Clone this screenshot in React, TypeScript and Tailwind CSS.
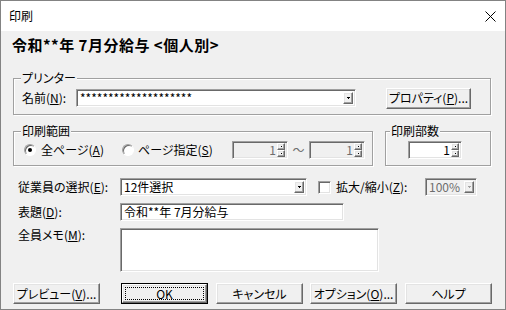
import type { ReactNode } from "react"

const sunken =
  "border border-t-[#a0a0a0] border-l-[#a0a0a0] border-r-white border-b-white shadow-[inset_1px_1px_0_#696969,inset_-1px_-1px_0_#e3e3e3]"
const raised =
  "border border-t-white border-l-white border-r-[#696969] border-b-[#696969] shadow-[inset_-1px_-1px_0_#a0a0a0,inset_1px_1px_0_#e3e3e3] bg-[#f0f0f0]"
const etched = "border border-[#a0a0a0] shadow-[1px_1px_0_#fff,inset_1px_1px_0_#fff]"

function DropArrow({ disabled = false }: { disabled?: boolean }) {
  return (
    <div className={`${raised} w-[10px] h-[12px] flex items-center justify-center shrink-0`}>
      <svg width="3" height="2" viewBox="0 0 3 2">
        <path d="M0 0h3v1H2v1H1V1H0z" fill={disabled ? "#a0a0a0" : "#000"} />
      </svg>
    </div>
  )
}

function Combo({ text, className, disabled = false }: { text: string; className: string; disabled?: boolean }) {
  return (
    <div
      className={`${sunken} ${className} h-[18px] flex items-center pl-[3px] pr-[2px] ${
        disabled ? "bg-[#f0f0f0] text-[#6d6d6d]" : "bg-white"
      }`}
    >
      <span className="flex-1 whitespace-nowrap">{text}</span>
      <DropArrow disabled={disabled} />
    </div>
  )
}

function SpinBtn() {
  return (
    <div className={`${raised} flex-1 flex items-center justify-center`}>
      <div className="w-[1px] h-[1px] bg-black" />
    </div>
  )
}

function Spin({ className, disabled = false }: { className: string; disabled?: boolean }) {
  return (
    <div
      className={`${sunken} ${className} h-[18px] flex items-center justify-end pr-[2px] ${
        disabled ? "bg-[#f0f0f0] text-[#6d6d6d]" : "bg-white"
      }`}
    >
      <span className="mr-[1px]">1</span>
      <div className="flex flex-col w-[8px] h-[14px]">
        <SpinBtn />
        <SpinBtn />
      </div>
    </div>
  )
}

function Radio({ checked = false }: { checked?: boolean }) {
  return (
    <div className="w-[12px] h-[12px] rounded-full border border-t-[#a0a0a0] border-l-[#a0a0a0] border-b-white border-r-white shadow-[inset_1px_1px_0_#696969] bg-white flex items-center justify-center shrink-0">
      {checked && <div className="w-[4px] h-[4px] rounded-full bg-black" />}
    </div>
  )
}

function Button({ children, className, isDefault = false }: { children: ReactNode; className: string; isDefault?: boolean }) {
  if (isDefault) {
    return (
      <div className={`${className} h-[21px] border border-black flex`}>
        <div className={`${raised} flex-1 flex p-[2px]`}>
          <div className="flex-1 border border-dotted border-black flex items-center justify-center whitespace-nowrap">
            {children}
          </div>
        </div>
      </div>
    )
  }
  return (
    <div className={`${raised} ${className} h-[21px] flex items-center justify-center whitespace-nowrap`}>{children}</div>
  )
}

export default function App() {
  return (
    <div className="w-[506px] h-[310px] border border-[#838383] flex flex-col font-['Noto_Sans_CJK_JP','Noto_Sans',sans-serif] [font-feature-settings:'palt'] text-[12px] leading-[14px] text-black overflow-hidden">
      {/* Title bar */}
      <div className="h-[30px] bg-white flex items-center justify-between pl-[8px] pr-[9px] shrink-0">
        <span>印刷</span>
        <svg width="11" height="11" viewBox="0 0 11 11">
          <path d="M0.5 0.5l10 10M10.5 0.5l-10 10" stroke="#000" strokeWidth="1" />
        </svg>
      </div>

      {/* Body */}
      <div className="flex-1 bg-[#f0f0f0] flex flex-col pl-[11px]">
        <h1 className="mt-[5px] text-[15px] leading-[18px] font-bold whitespace-pre tracking-[0.5px] [font-feature-settings:normal]">
          令和**年 7月分給与 &lt;個人別&gt;
        </h1>

        {/* Printer */}
        <div className={`relative ${etched} ml-[1px] mt-[24px] w-[478px] h-[37px] flex items-center pl-[8px] pt-[3px]`}>
          <span className="absolute -top-[8px] left-[7px] bg-[#f0f0f0] px-[1px]">プリンター</span>
          <span className="w-[54px] whitespace-nowrap">
            名前(<u>N</u>):
          </span>
          <Combo text="********************" className="w-[280px]" />
          <Button className="ml-[30px] w-[85px] h-[20px]">
            プロパティ(<u>P</u>)...
          </Button>
        </div>

        {/* Range + copies */}
        <div className="flex ml-[1px] mt-[16px] gap-[12px]">
          <div className={`relative ${etched} w-[360px] h-[35px] flex items-center pl-[10px] pt-[2px]`}>
            <span className="absolute -top-[8px] left-[7px] bg-[#f0f0f0] px-[1px]">印刷範囲</span>
            <div className="w-[98px] flex items-center gap-[5px] whitespace-nowrap">
              <Radio checked />
              <span>
                全ページ(<u>A</u>)
              </span>
            </div>
            <div className="w-[110px] flex items-center gap-[4px] whitespace-nowrap">
              <Radio />
              <span>
                ページ指定(<u>S</u>)
              </span>
            </div>
            <Spin className="w-[56px]" disabled />
            <span className="w-[21px] text-center text-[#6d6d6d]">～</span>
            <Spin className="w-[56px]" disabled />
          </div>
          <div className={`relative ${etched} w-[106px] h-[35px] flex items-center pl-[22px] pt-[2px]`}>
            <span className="absolute -top-[8px] left-[4px] bg-[#f0f0f0] px-[1px]">印刷部数</span>
            <Spin className="w-[54px]" />
          </div>
        </div>

        {/* Employees */}
        <div className="flex items-center ml-[6px] mt-[12px] whitespace-nowrap">
          <span className="w-[102px]">
            従業員の選択(<u>E</u>):
          </span>
          <Combo text="12件選択" className="w-[187px]" />
          <div className={`${sunken} ml-[11px] w-[13px] h-[13px] bg-white`} />
          <span className="ml-[5px] w-[89px]">
            拡大/縮小(<u>Z</u>):
          </span>
          <Combo text="100%" className="w-[52px]" disabled />
        </div>

        {/* Title */}
        <div className="flex items-center ml-[6px] mt-[7px] whitespace-nowrap">
          <span className="w-[102px]">
            表題(<u>D</u>):
          </span>
          <div className={`${sunken} w-[224px] h-[18px] bg-white flex items-center pl-[3px]`}>令和**年 7月分給与</div>
        </div>

        {/* Memo */}
        <div className="flex items-start ml-[6px] mt-[7px] whitespace-nowrap">
          <span className="w-[102px]">
            全員メモ(<u>M</u>):
          </span>
          <div className={`${sunken} w-[259px] h-[44px] bg-white`} />
        </div>

        {/* Buttons */}
        <div className="flex ml-[1px] mt-[11px]">
          <Button className="w-[87px]">
            プレビュー(<u>V</u>)...
          </Button>
          <Button className="ml-[21px] w-[87px]" isDefault>
            OK
          </Button>
          <Button className="ml-[8px] w-[87px]">キャンセル</Button>
          <Button className="ml-[7px] w-[87px]">
            オプション(<u>O</u>)...
          </Button>
          <Button className="ml-[8px] w-[87px]">ヘルプ</Button>
        </div>
      </div>
    </div>
  )
}
